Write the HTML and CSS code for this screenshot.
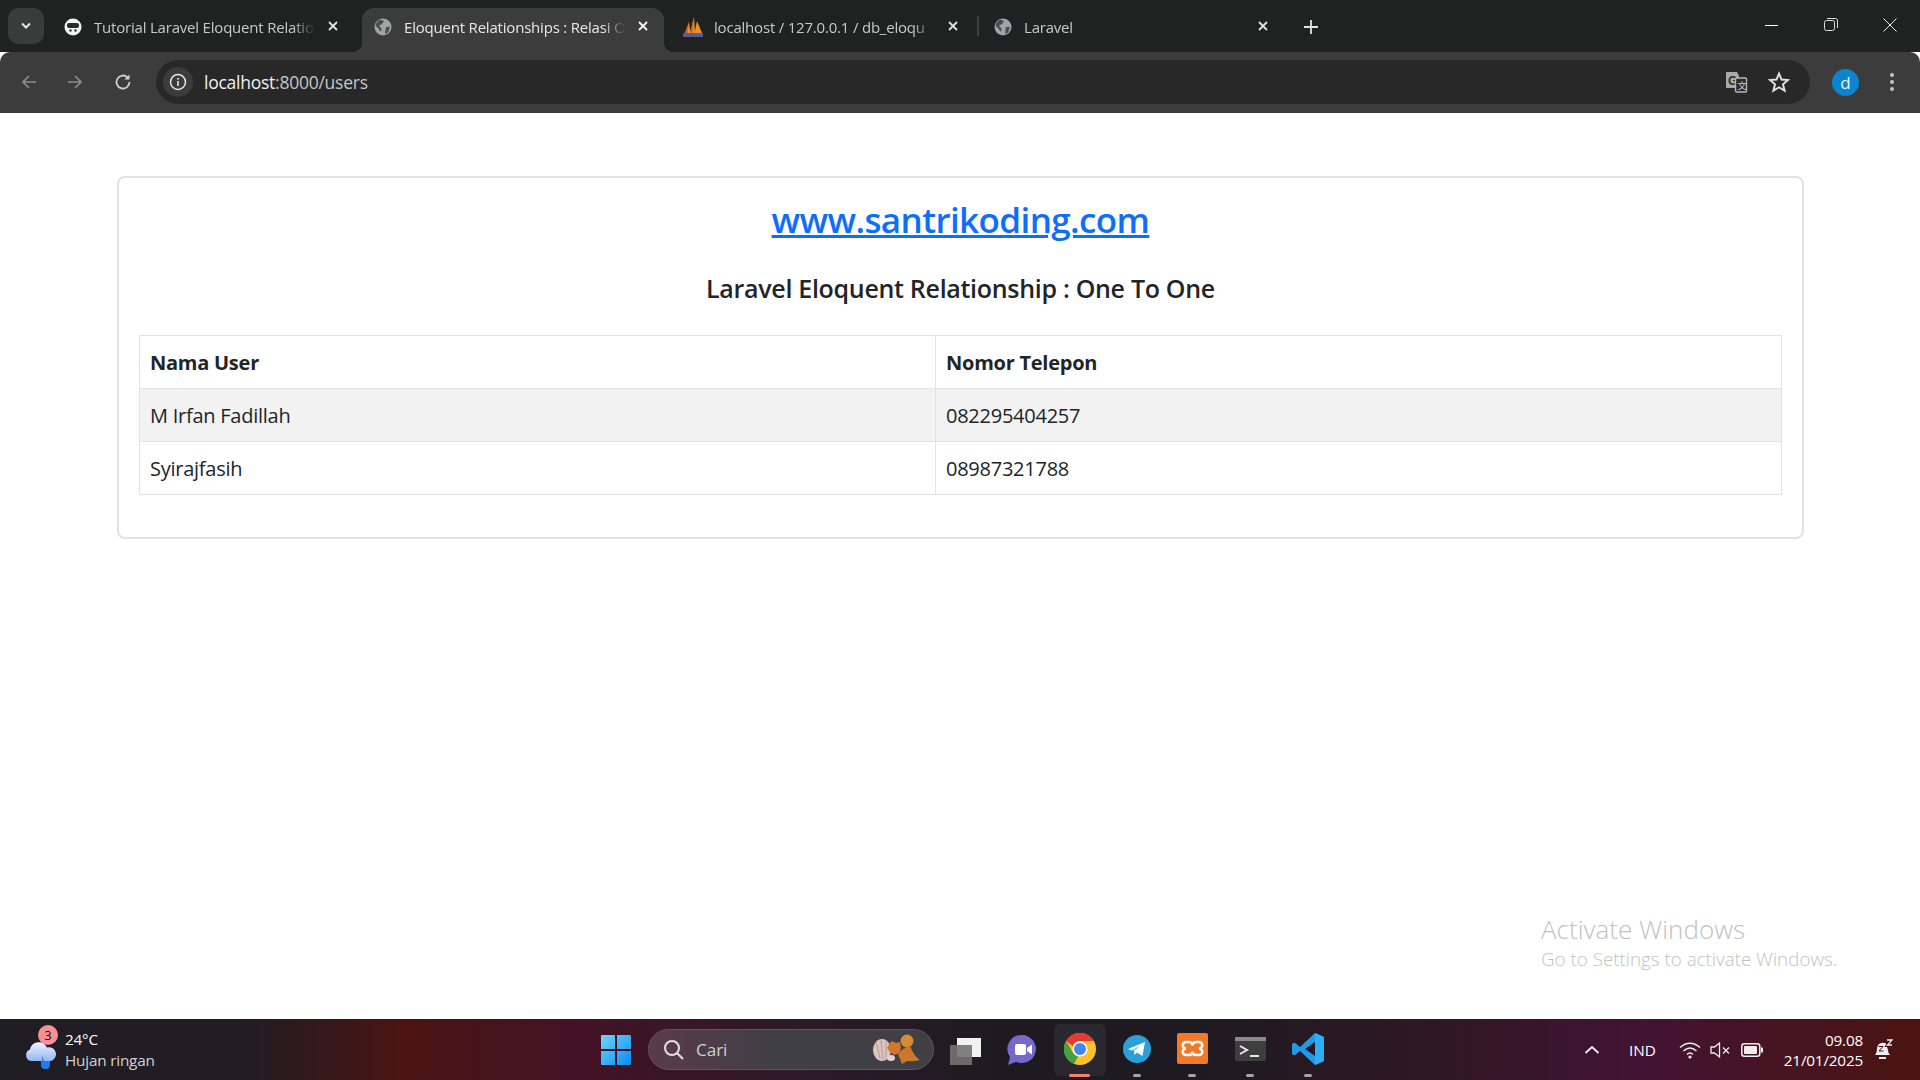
FILE: index.html
```html
<!DOCTYPE html>
<html lang="en">
<head>
    <meta charset="UTF-8">
    <title>localhost:8000/users</title>
    <link rel="stylesheet" href="styles.css">
</head>
<body>
    <!-- Browser tabs -->
    <div class="tabstrip">
        <button class="tab-search"><svg width="12" height="8" viewBox="0 0 12 8"><path d="M2 1.5 6 5.5 10 1.5" fill="none" stroke="#e8eaed" stroke-width="2"/></svg></button>
        <div class="tab">
            <svg class="favicon" viewBox="0 0 18 18"><circle cx="9" cy="9" r="8.5" fill="#f4f4f4"/><rect x="3" y="5" width="12" height="5" rx="2" fill="#2b2b2b"/><circle cx="6.5" cy="12.5" r="1.2" fill="#2b2b2b"/><circle cx="11.5" cy="12.5" r="1.2" fill="#2b2b2b"/></svg>
            <span class="tab-title">Tutorial Laravel Eloquent Relatio</span>
            <svg class="tab-close" viewBox="0 0 12 12"><path d="M2 2 10 10M10 2 2 10" stroke="#dfe1e3" stroke-width="1.8"/></svg>
        </div>
        <div class="tab tab-active">
            <svg class="favicon" viewBox="0 0 18 18"><use href="#globe"/></svg>
            <span class="tab-title">Eloquent Relationships : Relasi O</span>
            <svg class="tab-close" viewBox="0 0 12 12"><path d="M2 2 10 10M10 2 2 10" stroke="#fff" stroke-width="1.8"/></svg>
        </div>
        <div class="tab tab-sep">
            <svg class="favicon" viewBox="0 0 22 22"><path d="M3 17 7 6 8.5 17ZM8 17 12 1 13 17ZM12.5 17 15 5 20 17Z" fill="#f0901e"/><path d="M8 17 12 1 10.5 17ZM3 17 7 6 5.500 17Z" fill="#c9661a"/><rect x="1" y="17" width="20" height="4" fill="#5a5a96"/></svg>
            <span class="tab-title">localhost / 127.0.0.1 / db_eloqu</span>
            <svg class="tab-close" viewBox="0 0 12 12"><path d="M2 2 10 10M10 2 2 10" stroke="#dfe1e3" stroke-width="1.8"/></svg>
        </div>
        <div class="tab tab-sep">
            <svg class="favicon" viewBox="0 0 18 18"><use href="#globe"/></svg>
            <span class="tab-title">Laravel</span>
            <svg class="tab-close" viewBox="0 0 12 12"><path d="M2 2 10 10M10 2 2 10" stroke="#dfe1e3" stroke-width="1.8"/></svg>
        </div>
        <svg class="new-tab" width="14" height="14" viewBox="0 0 14 14"><path d="M7 0V14M0 7H14" stroke="#e3e3e3" stroke-width="1.8"/></svg>
        <div class="window-controls">
            <svg width="14" height="14" viewBox="0 0 14 14"><path d="M0 7.500H13" stroke="#fff"/></svg>
            <svg width="14" height="14" viewBox="0 0 14 14"><rect x="0.500" y="2.500" width="10" height="10" rx="2" fill="none" stroke="#ddd"/><path d="M3 .5H11.500Q13.500 .5 13.500 2.500V10" fill="none" stroke="#ddd"/></svg>
            <svg width="14" height="14" viewBox="0 0 14 14"><path d="M.5 .5 13.500 13.500M13.500 .5 .5 13.500" stroke="#eee"/></svg>
        </div>
    </div>

    <!-- Address bar -->
    <div class="toolbar">
        <svg class="nav-icon" viewBox="0 0 18 18"><path d="M16 9H3M9 3 3 9 9 15" fill="none" stroke="#8b8d8d" stroke-width="1.700"/></svg>
        <svg class="nav-icon" viewBox="0 0 18 18"><path d="M2 9H15M9 3 15 9 9 15" fill="none" stroke="#8b8d8d" stroke-width="1.700"/></svg>
        <svg class="nav-icon" viewBox="0 0 18 18"><path d="M15.500 9A6.500 6.500 0 1 1 13.500 4.300" fill="none" stroke="#d0d2d2" stroke-width="1.800"/><path d="M15.500 1.500V6.500H10.500Z" fill="#d0d2d2"/></svg>
        <div class="omnibox">
            <span class="site-info"><svg width="18" height="18" viewBox="0 0 18 18"><circle cx="9" cy="9" r="7.500" fill="none" stroke="#e6e6e6" stroke-width="1.500"/><rect x="8.200" y="8" width="1.600" height="5" fill="#e6e6e6"/><rect x="8.200" y="5" width="1.600" height="1.700" fill="#e6e6e6"/></svg></span>
            <span class="url">localhost<span class="url-path">:8000/users</span></span>
            <svg class="translate-icon" width="23" height="23" viewBox="0 0 23 23"><path d="M2 1H12L14 5V17H2Q1 17 1 16V2Q1 1 2 1Z" fill="#a9abab"/><text x="3" y="14" class="translate-g">G</text><rect x="10.500" y="7" width="11" height="14" rx="1" fill="#2c2c2c" stroke="#b5b5b5" stroke-width="1.400"/><text x="12.500" y="18" class="translate-x">文</text></svg>
            <svg class="star-icon" width="22" height="22" viewBox="0 0 22 22"><path d="M11 2.500 13.500 8.500 20 9 15 13.300 16.600 19.700 11 16.300 5.400 19.700 7 13.300 2 9 8.500 8.500Z" fill="none" stroke="#e4e4e4" stroke-width="1.900"/></svg>
        </div>
        <span class="avatar">d</span>
        <svg class="menu-dots" width="6" height="20" viewBox="0 0 6 20"><circle cx="3" cy="3" r="2" fill="#c4c4c4"/><circle cx="3" cy="10" r="2" fill="#c4c4c4"/><circle cx="3" cy="17" r="2" fill="#c4c4c4"/></svg>
    </div>

    <!-- Page content -->
    <main class="page">
        <div class="card">
            <h2 class="site-link"><a href="#">www.santrikoding.com</a></h2>
            <h3 class="page-title">Laravel Eloquent Relationship : One To One</h3>
            <table class="users">
                <thead>
                    <tr><th class="col-name">Nama User</th><th>Nomor Telepon</th></tr>
                </thead>
                <tbody>
                    <tr class="striped"><td>M Irfan Fadillah</td><td>082295404257</td></tr>
                    <tr><td>Syirajfasih</td><td>08987321788</td></tr>
                </tbody>
            </table>
        </div>
        <div class="activate">
            <div class="activate-title">Activate Windows</div>
            <div class="activate-sub">Go to Settings to activate Windows.</div>
        </div>
    </main>

    <!-- Windows taskbar -->
    <footer class="taskbar">
        <div class="weather">
            <span class="weather-icon">
                <svg width="34" height="30" viewBox="0 0 34 30"><defs><linearGradient id="cloud" x1="0" y1="0" x2="0" y2="1"><stop offset="0" stop-color="#f2f6ff"/><stop offset="1" stop-color="#8fb6f0"/></linearGradient></defs><rect x="17" y="13" width="9" height="17" rx="4" fill="#1f7bf2"/><path d="M7 22A6 6 0 0 1 6 10.500 9 9 0 0 1 23 8.500 7 7 0 0 1 27 22H20L18 17V22Z" fill="url(#cloud)"/></svg>
                <span class="weather-badge">3</span>
            </span>
            <div class="weather-text">
                <div class="temp">24°C</div>
                <div class="cond">Hujan ringan</div>
            </div>
        </div>
        <div class="task-icons">
            <svg class="start" width="30" height="30" viewBox="0 0 30 30"><defs><linearGradient id="win" x1="0" y1="0" x2="1" y2="1"><stop offset="0" stop-color="#6fd4fb"/><stop offset="1" stop-color="#0c8cf0"/></linearGradient></defs><path d="M0 1Q0 0 1 0H14V14H0ZM16 0H29Q30 0 30 1V14H16ZM0 16H14V30H1Q0 30 0 29ZM16 16H30V29Q30 30 29 30H16Z" fill="url(#win)"/></svg>
            <div class="search">
                <svg width="21" height="21" viewBox="0 0 21 21"><circle cx="9" cy="9" r="7" fill="none" stroke="#e3e3e3" stroke-width="2"/><path d="M14 14 20 20" stroke="#e3e3e3" stroke-width="2"/></svg>
                <span class="search-text">Cari</span>
                <svg class="squirrel" width="50" height="36" viewBox="0 0 50 36"><ellipse cx="10" cy="18" rx="9" ry="11" fill="#dcc4c0"/><path d="M4 10 8 26M9 8 11 28M14 9 14 27" stroke="#b99b98"/><ellipse cx="35" cy="9" rx="6.500" ry="6.500" fill="#d98a35"/><path d="M38 14Q42 24 48 28 40 30 35 29L30 32 26 22Q30 16 38 14Z" fill="#c9782a"/><path d="M17 12 20 9 24 11 28 10 29 16Q28 22 22 23 17 20 15 16Z" fill="#d5762a"/><ellipse cx="19" cy="26" rx="4" ry="3" fill="#e8d2da"/></svg>
            </div>
            <svg class="task-view" width="32" height="30" viewBox="0 0 32 30"><rect x="8" y="3" width="24" height="19" fill="#f2f2f2"/><rect x="1" y="10" width="22" height="20" fill="#737373" fill-opacity="0.900"/></svg>
            <svg class="meet" width="30" height="32" viewBox="0 0 30 32"><path d="M15 1A14 14 0 1 1 9 27.700L1 31 3 23A14 14 0 0 1 15 1Z" fill="#7569c9"/><rect x="8" y="10" width="11" height="11" rx="2" fill="#fff"/><path d="M20 14 25 10.500V20.500L20 17Z" fill="#fff"/></svg>
            <div class="task-app task-app-active">
                <svg width="32" height="32" viewBox="0 0 32 32"><circle cx="16" cy="16" r="16" fill="#fbc02d"/><path d="M16 0A16 16 0 0 1 29.900 8H16A8 8 0 0 0 8.600 13L2.100 8A16 16 0 0 1 16 0Z" fill="#e53935"/><path d="M2.100 8 8.900 19.800A8 8 0 0 0 14 23.800L10 31A16 16 0 0 1 2.100 8Z" fill="#43a047"/><circle cx="16" cy="16" r="7.500" fill="#fff"/><circle cx="16" cy="16" r="6" fill="#4285f4"/></svg>
                <span class="run-mark run-mark-on"></span>
            </div>
            <div class="task-app">
                <svg width="28" height="28" viewBox="0 0 28 28"><circle cx="14" cy="14" r="14" fill="#2a9fd8"/><path d="M5 14 22 7 19.500 21 14 17.500 11.500 20 11 15.500 18 10 9 15.500Z" fill="#fff"/></svg>
                <span class="run-mark"></span>
            </div>
            <div class="task-app app-xampp">
                <svg width="31" height="31" viewBox="0 0 31 31"><rect width="31" height="31" rx="2" fill="#f0792a"/><path d="M9 9H12Q15.500 9 15.500 12.500 15.500 9 19 9H22A3 3 0 0 1 22 15.500 3 3 0 0 1 22 22H19Q15.500 22 15.500 18.500 15.500 22 12 22H9A3 3 0 0 1 9 15.500 3 3 0 0 1 9 9Z" fill="none" stroke="#fff" stroke-width="2.600"/></svg>
                <span class="run-mark"></span>
            </div>
            <div class="task-app app-terminal">
                <svg width="31" height="24" viewBox="0 0 31 24"><rect width="31" height="24" rx="2" fill="#3e3e3e"/><rect width="31" height="4" fill="#8a8a8a"/><path d="M5 9 12 13 5 17" fill="none" stroke="#e8e8e8" stroke-width="2"/><path d="M15 19H24" stroke="#e8e8e8" stroke-width="2"/></svg>
                <span class="run-mark"></span>
            </div>
            <div class="task-app app-code">
                <svg width="32" height="32" viewBox="0 0 32 32"><path d="M23 0 32 4V28L23 32 8 18 2.500 22.500 0 21V11L2.500 9.500 8 14ZM23 9 13 16 23 23Z" fill="#1e9ae6"/><path d="M23 0 32 4V28L23 32Z" fill="#2cb0f2"/></svg>
                <span class="run-mark"></span>
            </div>
        </div>
        <div class="tray">
            <svg class="tray-chevron" width="16" height="10" viewBox="0 0 16 10"><path d="M1.500 8 8 2 14.500 8" fill="none" stroke="#eee" stroke-width="1.800"/></svg>
            <span class="lang">IND</span>
            <svg width="22" height="18" viewBox="0 0 22 18"><path d="M1 6.500Q11 -2 21 6.500M4.500 10Q11 4 17.500 10M8 13.500Q11 10.500 14 13.500" fill="none" stroke="#eee" stroke-width="1.500"/><circle cx="11" cy="16" r="1.600" fill="#eee"/></svg>
            <svg width="22" height="18" viewBox="0 0 22 18"><path d="M1 6H4.500L9.500 2V16L4.500 12H1Z" fill="none" stroke="#eee" stroke-width="1.300"/><path d="M13 6.500 19 12.500M19 6.500 13 12.500" stroke="#eee" stroke-width="1.300"/></svg>
            <svg width="22" height="14" viewBox="0 0 22 14"><rect x="0.800" y="0.800" width="18" height="12.400" rx="2.500" fill="none" stroke="#eee" stroke-width="1.500"/><rect x="3" y="3" width="13" height="8" rx="1" fill="#eee"/><rect x="20" y="4.500" width="2" height="5" fill="#eee"/></svg>
            <div class="clock">
                <div>09.08</div>
                <div>21/01/2025</div>
            </div>
            <svg class="bell" width="20" height="22" viewBox="0 0 20 22"><path d="M2 16Q4 14 4 9A6 6 0 0 1 13 4.500L15 11Q15 14 17 16Z" fill="#eee"/><rect x="6" y="18" width="7" height="2" fill="#eee"/><path d="M12 3H16L12 7.500H16M5.500 7.500H10L6 12H10.500" fill="none" stroke="#3a1125" stroke-width="1"/><path d="M14 1H19L14.500 6H19" fill="none" stroke="#eee" stroke-width="1.300"/></svg>
        </div>
    </footer>

    <!-- shared globe icon -->
    <svg class="icon-defs" width="0" height="0"><symbol id="globe" viewBox="0 0 18 18"><circle cx="9" cy="9" r="8.500" fill="#a0a4a8"/><path d="M6 1.500 10 3 8 6 5 7.500 7.500 10.500 7 14 4 10 1.500 8Q2 4 6 1.500ZM12 9H16L14 14.500 11 16 11.500 12Z" fill="#4a4d50"/></symbol></svg>
</body>
</html>
```

FILE: styles.css
```css
/* Page reset */
* { box-sizing: border-box; }
html, body { margin: 0; height: 100%; }
body { width: 1920px; height: 1080px; overflow: hidden; display: flex; flex-direction: column; font-family: "Open Sans", "Noto Sans", sans-serif; background-color: #fff; color: #212529; }
svg { display: block; flex: none; }
.icon-defs { position: absolute; }

/* Tab strip */
.tabstrip { height: 52px; background-color: #202222; display: flex; align-items: flex-end; padding-left: 8px; }
.tab-search { width: 36px; height: 36px; margin-bottom: 8px; margin-right: 8px; background-color: #3a3b3b; border: none; border-radius: 10px; display: flex; align-items: center; justify-content: center; padding: 0; }
.tab { position: relative; width: 302px; height: 44px; margin-right: 8px; padding-left: 12px; padding-right: 15px; display: flex; align-items: center; border-radius: 12px 12px 0 0; color: #c8c9c9; font-size: 15px; letter-spacing: -0.200px; }
.tab-active { background-color: #3c3c3c; color: #e8e8e8; }
.tab-active::before, .tab-active::after { content: ""; position: absolute; bottom: 0; width: 10px; height: 10px; }
.tab-active::before { left: -10px; background: radial-gradient(circle at 0 0, transparent 10px, #3c3c3c 10.500px); }
.tab-active::after { right: -10px; background: radial-gradient(circle at 100% 0, transparent 10px, #3c3c3c 10.500px); }
.tab-sep::after { content: ""; position: absolute; left: -5px; top: 8px; height: 20px; width: 2px; background-color: #3f4040; }
.tab-sep:nth-of-type(3)::after { display: none; }
.tab .favicon { width: 18px; height: 18px; margin-right: 12px; margin-bottom: 6px; }
.tab:nth-of-type(3) .favicon { width: 22px; height: 22px; margin-left: -2px; margin-right: 10px; }
.tab-title { flex: 1; white-space: nowrap; overflow: hidden; margin-bottom: 6px; -webkit-mask-image: linear-gradient(to right, #000 90%, transparent 100%); mask-image: linear-gradient(to right, #000 90%, transparent 100%); }
.tab-close { width: 12px; height: 12px; margin-left: 12px; margin-bottom: 8px; }
.new-tab { margin-left: 12px; margin-bottom: 18px; position: relative; }
.window-controls { margin-left: auto; margin-right: 23px; margin-bottom: 20px; display: flex; gap: 45px; }

/* Toolbar */
.toolbar { height: 61px; background-color: #3c3c3c; border-radius: 10px 10px 0 0; display: flex; align-items: center; padding-left: 20px; padding-right: 24px; padding-bottom: 1px; }
.nav-icon { width: 18px; height: 18px; margin-right: 28px; }
.nav-icon:nth-child(2) { margin-right: 30px; }
.nav-icon:nth-child(3) { margin-right: 24px; }
.omnibox { width: 1654px; height: 44px; background-color: #282828; border-radius: 22px; display: flex; align-items: center; padding-left: 7px; padding-right: 20px; }
.site-info { width: 30px; height: 30px; border-radius: 50%; background-color: #3c3c3c; display: flex; align-items: center; justify-content: center; margin-right: 11px; }
.url { flex: 1; color: #f1f1f1; font-size: 17.500px; letter-spacing: -0.250px; }
.url-path { color: #c6c6c6; }
.translate-icon { margin-right: 20px; }
.translate-g { font-family: "Liberation Sans", sans-serif; font-size: 12px; font-weight: bold; fill: #2c2c2c; }
.translate-x { font-family: "Noto Sans CJK SC", sans-serif; font-size: 9px; fill: #d0d0d0; }
.avatar { width: 27px; height: 27px; margin-left: 22px; border-radius: 50%; background-color: #0b85d0; color: #e6f4ff; font-size: 17px; display: flex; align-items: center; justify-content: center; }
.menu-dots { margin-left: 30px; }

/* Page content */
.page { flex: 1; position: relative; padding: 63px 116px 0 117px; }
.card { border: 2px solid #e2e2e2; border-radius: 8px; padding: 0 20px 42px 20px; text-align: center; }
.site-link { margin: 0; padding-top: 17px; font-size: 35px; line-height: 50px; font-weight: 600; letter-spacing: -0.600px; }
.site-link a { color: #0d6efd; }
.page-title { margin: 26px 0 30px; font-size: 25px; line-height: 34px; font-weight: 600; letter-spacing: -0.300px; }
.users { width: 100%; border-collapse: collapse; text-align: left; font-size: 20px; letter-spacing: -0.250px; }
.users th, .users td { height: 53px; padding: 0 10px; border: 1.500px solid #e1e3e6; }
.users th { font-weight: 700; }
.col-name { width: 796px; }
.striped td { background-color: #f2f2f2; }

/* Activate Windows watermark */
.activate { position: absolute; left: 1541px; top: 799px; color: #c2c2c2; font-weight: 300; }
.activate-title { font-size: 26px; line-height: 34px; }
.activate-sub { font-size: 18.800px; line-height: 26px; }

/* Taskbar */
.taskbar { height: 61px; display: flex; align-items: center; color: #fff; background: linear-gradient(to right, #1f1d24 0, #221c22 250px, #4a1412 400px, #431226 580px, #2d1a2a 800px, #1e1a22 1000px, #1f1a22 1200px, #2c1823 1400px, #431333 1650px, #4a1412 1900px); }
.weather { width: 601px; display: flex; align-items: center; padding-left: 24px; }
.weather-icon { position: relative; width: 41px; height: 30px; margin-top: 8px; }
.weather-badge { position: absolute; left: 14px; top: -14px; width: 20px; height: 20px; border-radius: 50%; background-color: #fb8f96; color: #2a1014; font-size: 13px; line-height: 20px; text-align: center; }
.weather-text { font-size: 15.300px; line-height: 21px; letter-spacing: -0.200px; }
.cond { color: #d2d2d2; }
.task-icons { display: flex; align-items: center; }
.search { width: 286px; height: 41px; margin-left: 17px; margin-right: 15px; border-radius: 21px; border: 1px solid #5d5760; background: linear-gradient(to right, #5a3a4a, #403f45 45%); display: flex; align-items: center; padding-left: 14px; color: #d0d0d0; font-size: 17px; }
.search-text { flex: 1; margin-left: 12px; }
.squirrel { margin-right: 11px; }
.meet { margin-left: 26px; }
.task-app { position: relative; width: 52px; height: 52px; display: flex; align-items: center; justify-content: center; border-radius: 6px; padding-bottom: 2px; }
.task-icons .meet + .task-app { margin-left: 17px; }
.task-app + .task-app { margin-left: 5px; }
.task-icons .app-xampp { margin-left: 3px; }
.task-icons .app-terminal { margin-left: 6px; }
.task-icons .app-code { margin-left: 6px; }
.task-app-active { background-color: #2a282e; }
.run-mark { position: absolute; bottom: -1px; left: 22px; width: 8px; height: 3px; border-radius: 2px; background-color: #a6a6a6; }
.run-mark-on { left: 15px; width: 21px; background-color: #f4826e; }
.tray { margin-left: auto; margin-right: 27px; display: flex; align-items: center; gap: 9px; font-size: 15.300px; }
.tray-chevron { margin-right: 20px; }
.lang { margin-right: 14px; }
.clock { margin-left: 12px; margin-right: 1px; text-align: right; line-height: 20px; letter-spacing: -0.200px; }
```
